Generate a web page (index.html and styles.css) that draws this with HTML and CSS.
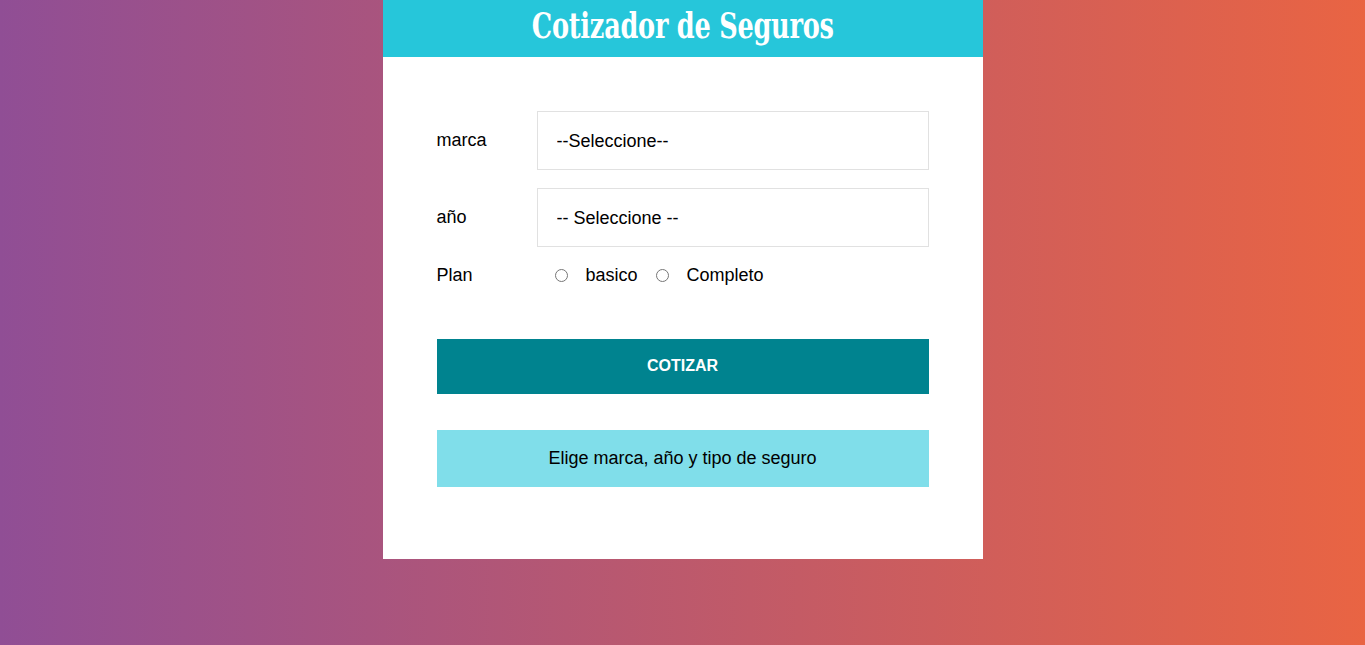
FILE: index.html
```html
<!DOCTYPE html>
<html lang="es">
<head>
<meta charset="utf-8">
<title>Cotizador de Seguros</title>
<link rel="stylesheet" href="styles.css">
</head>
<body>
<div class="app">
  <header class="header">
    <h1 class="title">Cotizador de Seguros</h1>
  </header>
  <form class="form">
    <div class="field">
      <label class="label">marca</label>
      <select class="select">
        <option>--Seleccione--</option>
      </select>
    </div>
    <div class="field">
      <label class="label">año</label>
      <select class="select">
        <option>-- Seleccione --</option>
      </select>
    </div>
    <div class="field field-plan">
      <label class="label">Plan</label>
      <div class="radios">
        <input class="radio" type="radio" name="plan" value="basico"><span class="radio-text">basico</span>
        <input class="radio" type="radio" name="plan" value="completo"><span class="radio-text">Completo</span>
      </div>
    </div>
    <button type="button" class="button">COTIZAR</button>
    <div class="message">Elige marca, año y tipo de seguro</div>
  </form>
</div>
</body>
</html>
```

FILE: styles.css
```css
* { box-sizing: border-box; }
html, body { height: 100%; }
body {
  margin: 0;
  background: linear-gradient(to right, #904e95, #e96443);
  font-family: "Liberation Sans", Arial, sans-serif;
  font-size: 18px;
  color: #000;
}
.app {
  width: 600px;
  margin: 0 auto;
  background: #fff;
}
.header {
  background: #26c6da;
  height: 57px;
  display: flex;
  align-items: center;
  justify-content: center;
  padding-bottom: 6px;
}
.title {
  margin: 0;
  color: #fff;
  font-family: "DejaVu Serif", serif;
  font-weight: bold;
  font-size: 35px;
  letter-spacing: -0.3px;
  line-height: 1;
  white-space: nowrap;
  transform: scaleX(0.73);
}
.form {
  padding: 54px 54px 72px;
  display: flex;
  flex-direction: column;
}
.field {
  display: flex;
  align-items: center;
  margin-bottom: 18px;
}
.label {
  flex: 0 0 100px;
}
.select {
  flex: 1;
  height: 59px;
  padding: 0 19px;
  border: 1px solid #e1e1e1;
  background: #fff;
  font-family: "Liberation Sans", Arial, sans-serif;
  font-size: 18px;
  color: #000;
  -webkit-appearance: none;
  appearance: none;
  border-radius: 0;
}
.field-plan {
  height: 20px;
  margin-bottom: 54px;
}
.radios {
  display: flex;
  align-items: center;
}
.radio {
  margin: 0 18px 0 18px;
  width: 13px;
  height: 13px;
}
.button {
  height: 55px;
  border: none;
  background: #00838f;
  color: #fff;
  font-family: "Liberation Sans", Arial, sans-serif;
  font-weight: bold;
  font-size: 16px;
  text-transform: uppercase;
  margin-bottom: 36px;
  padding-bottom: 2px;
}
.message {
  background: #80deea;
  height: 57px;
  display: flex;
  align-items: center;
  justify-content: center;
}
```
